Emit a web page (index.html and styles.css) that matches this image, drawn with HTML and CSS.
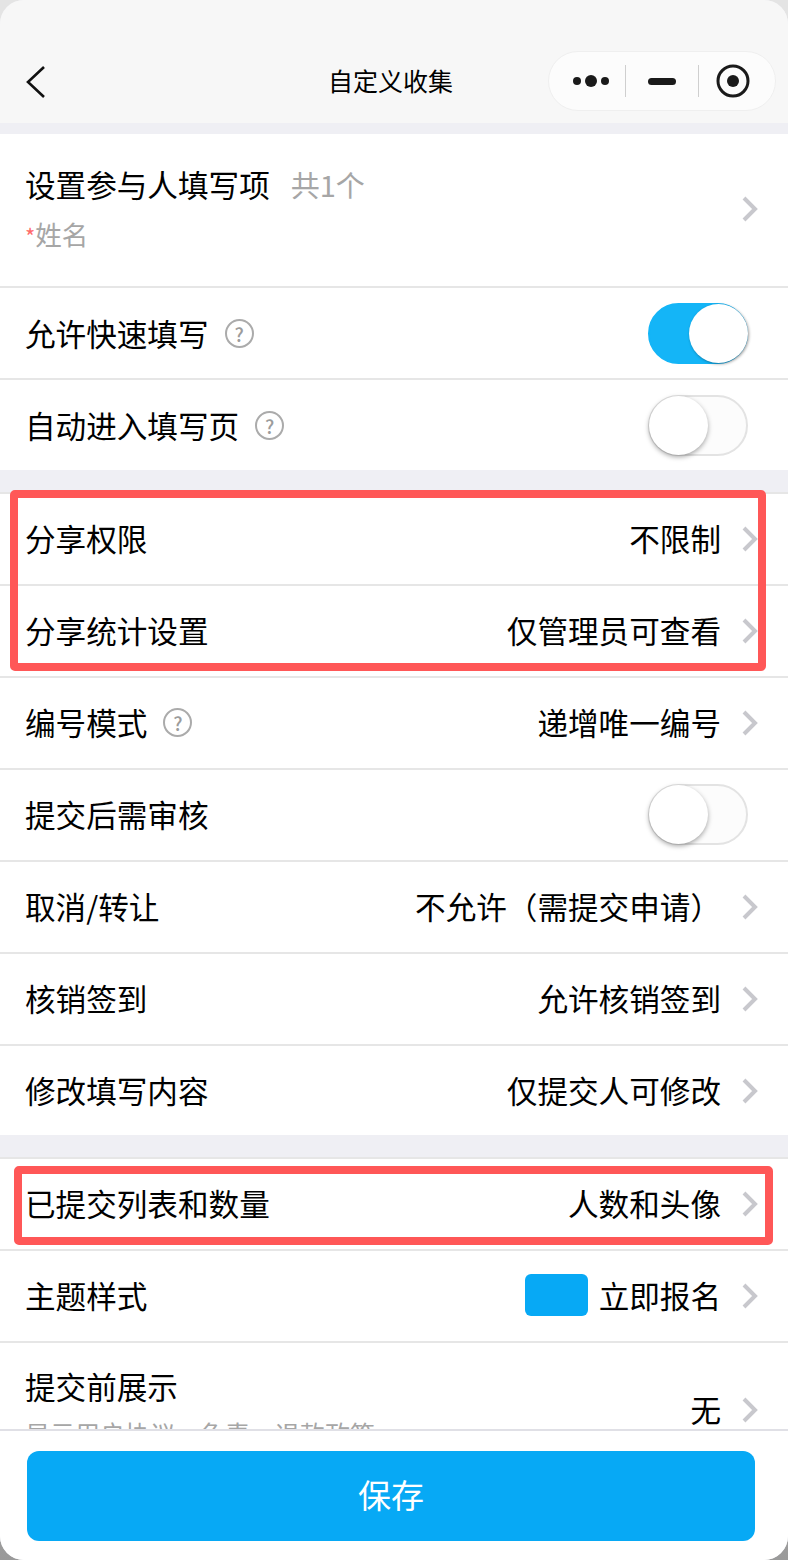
FILE: index.html
```html
<!DOCTYPE html>
<html lang="zh-CN">
<head>
<meta charset="utf-8">
<title>自定义收集</title>
<link rel="stylesheet" href="styles.css">
</head>
<body>
<div class="phone">
  <header class="nav">
    <svg class="back" width="22" height="34" viewBox="0 0 22 34"><polyline points="19,2 3,17 19,32" fill="none" stroke="#111" stroke-width="2.6"/></svg>
    <div class="nav-title">自定义收集</div>
    <div class="capsule">
      <svg class="cap-more" width="38" height="16" viewBox="0 0 38 16"><circle cx="4" cy="8" r="4" fill="#1a1a1a"/><circle cx="18" cy="8" r="6" fill="#1a1a1a"/><circle cx="32" cy="8" r="4" fill="#1a1a1a"/></svg>
      <span class="cap-line"></span>
      <span class="cap-min"></span>
      <span class="cap-line"></span>
      <svg class="cap-rec" width="34" height="34" viewBox="0 0 34 34"><circle cx="17" cy="17" r="15" fill="none" stroke="#1a1a1a" stroke-width="3"/><circle cx="17" cy="17" r="6" fill="#1a1a1a"/></svg>
    </div>
  </header>
  <main class="content">
    <section class="group group-first">
      <div class="row row-tall">
        <div class="stack">
          <div class="label">设置参与人填写项<span class="count">共1个</span></div>
          <div class="sub"><span class="star">*</span>姓名</div>
        </div>
        <svg class="chev" width="16" height="26" viewBox="0 0 16 26"><polyline points="2,2 13,13 2,24" fill="none" stroke="#c8c8cd" stroke-width="4"/></svg>
      </div>
      <div class="row">
        <div class="label">允许快速填写<span class="help">?</span></div>
        <div class="switch on"><span class="knob"></span></div>
      </div>
      <div class="row row-end">
        <div class="label">自动进入填写页<span class="help">?</span></div>
        <div class="switch"><span class="knob"></span></div>
      </div>
    </section>
    <section class="group">
      <div class="row"><div class="label">分享权限</div><div class="value">不限制</div><svg class="chev" width="16" height="26" viewBox="0 0 16 26"><polyline points="2,2 13,13 2,24" fill="none" stroke="#c8c8cd" stroke-width="4"/></svg></div>
      <div class="row"><div class="label">分享统计设置</div><div class="value">仅管理员可查看</div><svg class="chev" width="16" height="26" viewBox="0 0 16 26"><polyline points="2,2 13,13 2,24" fill="none" stroke="#c8c8cd" stroke-width="4"/></svg></div>
      <div class="row"><div class="label">编号模式<span class="help">?</span></div><div class="value">递增唯一编号</div><svg class="chev" width="16" height="26" viewBox="0 0 16 26"><polyline points="2,2 13,13 2,24" fill="none" stroke="#c8c8cd" stroke-width="4"/></svg></div>
      <div class="row"><div class="label">提交后需审核</div><div class="switch"><span class="knob"></span></div></div>
      <div class="row"><div class="label">取消/转让</div><div class="value">不允许（需提交申请）</div><svg class="chev" width="16" height="26" viewBox="0 0 16 26"><polyline points="2,2 13,13 2,24" fill="none" stroke="#c8c8cd" stroke-width="4"/></svg></div>
      <div class="row"><div class="label">核销签到</div><div class="value">允许核销签到</div><svg class="chev" width="16" height="26" viewBox="0 0 16 26"><polyline points="2,2 13,13 2,24" fill="none" stroke="#c8c8cd" stroke-width="4"/></svg></div>
      <div class="row row-end"><div class="label">修改填写内容</div><div class="value">仅提交人可修改</div><svg class="chev" width="16" height="26" viewBox="0 0 16 26"><polyline points="2,2 13,13 2,24" fill="none" stroke="#c8c8cd" stroke-width="4"/></svg></div>
    </section>
    <section class="group">
      <div class="row"><div class="label">已提交列表和数量</div><div class="value">人数和头像</div><svg class="chev" width="16" height="26" viewBox="0 0 16 26"><polyline points="2,2 13,13 2,24" fill="none" stroke="#c8c8cd" stroke-width="4"/></svg></div>
      <div class="row"><div class="label">主题样式</div><span class="swatch"></span><div class="value">立即报名</div><svg class="chev" width="16" height="26" viewBox="0 0 16 26"><polyline points="2,2 13,13 2,24" fill="none" stroke="#c8c8cd" stroke-width="4"/></svg></div>
      <div class="row row-last">
        <div class="stack stack-last">
          <div class="label">提交前展示</div>
          <div class="sub sub-small">显示用户协议、免责、退款政策</div>
        </div>
        <div class="value">无</div>
        <svg class="chev" width="16" height="26" viewBox="0 0 16 26"><polyline points="2,2 13,13 2,24" fill="none" stroke="#c8c8cd" stroke-width="4"/></svg>
      </div>
    </section>
  </main>
  <footer class="footer"><button class="save">保存</button></footer>
  <div class="mark mark-a"></div>
  <div class="mark mark-b"></div>
</div>
</body>
</html>
```
FILE: styles.css
```css
html, body { margin: 0; padding: 0; }
body {
  width: 788px;
  height: 1560px;
  overflow: hidden;
  background: linear-gradient(#e4e4e4 0, #e4e4e4 50%, #9a9a9a 100%);
  font-family: "Noto Sans CJK SC", "Noto Sans", sans-serif;
  color: #000;
}
.phone {
  position: relative;
  width: 788px;
  height: 1560px;
  border-radius: 24px;
  overflow: hidden;
  background: #efeff4;
  display: flex;
  flex-direction: column;
}
.nav {
  position: relative;
  flex: none;
  height: 123px;
  margin-bottom: 11px;
  background: #f7f7f7;
  display: flex;
  align-items: flex-start;
  padding: 64px 12px 0 25px;
  box-sizing: border-box;
}
.back { flex: none; margin-top: 1px; }
.nav-title {
  position: absolute;
  left: 0;
  right: 0;
  top: 62px;
  text-align: center;
  font-size: 25px;
  line-height: 36px;
  margin-left: -7px;
}
.capsule {
  margin-left: auto;
  margin-top: -13px;
  width: 228px;
  height: 60px;
  box-sizing: border-box;
  border: 1px solid #efefef;
  border-radius: 30px;
  background: #fcfcfc;
  display: flex;
  align-items: center;
}
.cap-more { margin-left: 24px; flex: none; }
.cap-line { flex: none; width: 1px; height: 32px; background: #cfcfcf; margin-left: 14px; }
.cap-min { flex: none; width: 28px; height: 7px; border-radius: 4px; background: #1a1a1a; margin: 0 8px 0 22px; }
.cap-rec { flex: none; margin-left: 17px; }
.content {
  flex: 1;
  min-height: 0;
  overflow: hidden;
  display: flex;
  flex-direction: column;
  gap: 22px;
}
.group { background: #fff; flex: none; }
.group + .group { border-top: 2px solid #e6e6e6; }
.row {
  height: 92px;
  box-sizing: border-box;
  border-bottom: 2px solid #e6e6e6;
  padding: 0 30px 2px 25px;
  display: flex;
  align-items: center;
}
.group-first .row { padding-bottom: 0; }
.group-first .row-end { height: 90px; }
.group-first .row-tall { height: 154px; padding-bottom: 4px; }
.row-end { border-bottom: none; height: 89px; }
.row-last { height: 132px; border-bottom: none; padding-bottom: 0; }
.stack { flex: 1; min-width: 0; }
.stack-last { align-self: flex-start; padding-top: 21px; }
.label {
  flex: 1;
  min-width: 0;
  font-size: 30.6px;
  line-height: 44px;
  display: flex;
  align-items: center;
  white-space: nowrap;
}
.count { font-size: 29px; color: #a6a6a6; margin-left: 21px; }
.sub { font-size: 26.5px; line-height: 38px; color: #a6a6a6; margin-top: 9px; }
.sub-small { font-size: 25px; line-height: 36px; margin-top: 7px; }
.star { color: #ff6a6a; font-size: 22px; }
.help {
  flex: none;
  width: 29px;
  height: 29px;
  box-sizing: border-box;
  margin-left: 16px;
  border: 2px solid #ababab;
  border-radius: 50%;
  color: #9c9c9c;
  font-size: 19px;
  line-height: 25px;
  text-align: center;
  font-weight: 500;
}
.value { flex: none; font-size: 30.6px; line-height: 36px; white-space: nowrap; }
.chev { flex: none; margin: 2px 0 0 21px; }
.switch {
  position: relative;
  flex: none;
  width: 100px;
  height: 61px;
  box-sizing: border-box;
  margin-right: 10px;
  border: 2px solid #e3e3e3;
  border-radius: 31px;
  background: #fcfcfc;
}
.switch.on { background: #14b5f7; border-color: #14b5f7; }
.knob {
  position: absolute;
  left: -1px;
  top: -1px;
  width: 59px;
  height: 59px;
  border-radius: 50%;
  background: #fff;
  box-shadow: 0 2px 5px rgba(0, 0, 0, .35);
}
.switch.on .knob { left: 39px; box-shadow: 1px 1px 3px rgba(0, 0, 0, .4); }
.swatch {
  flex: none;
  width: 63px;
  height: 42px;
  border-radius: 6px;
  background: #07a9f5;
  margin-right: 11px;
}
.footer {
  flex: none;
  height: 131px;
  box-sizing: border-box;
  background: #fff;
  border-top: 2px solid #e0e0e6;
  padding: 20px 33px 19px 27px;
  display: flex;
}
.save {
  flex: 1;
  height: 90px;
  border: none;
  border-radius: 12px;
  background: #07a9f5;
  color: #fff;
  font-family: inherit;
  font-size: 33px;
  padding: 0 0 4px;
}
.mark {
  position: absolute;
  box-sizing: border-box;
  border: 8px solid #ff5757;
  border-radius: 5px;
}
.mark-a { left: 10px; top: 490px; width: 756px; height: 181px; }
.mark-b { left: 14px; top: 1166px; width: 759px; height: 79px; }
```
